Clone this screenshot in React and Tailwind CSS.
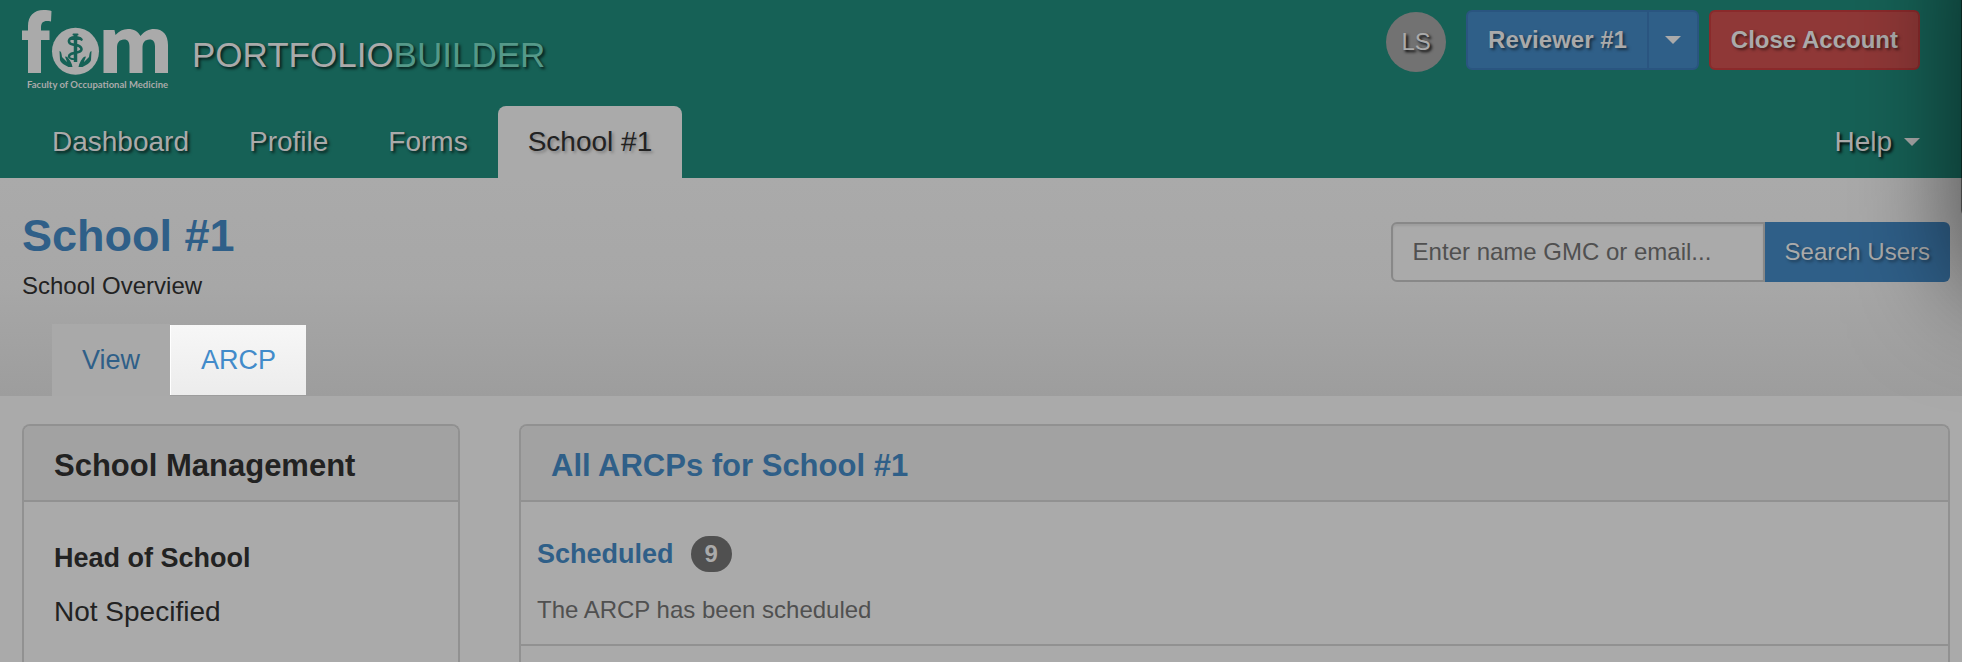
import { useState } from 'react';

const NAV_ITEMS = ['Dashboard', 'Profile', 'Forms', 'School #1'];

const Logo = () => (
  <svg width="146" height="80" viewBox="0 0 146 80" className="overflow-visible" role="img" aria-label="Faculty of Occupational Medicine">
    <g fill="#aaaaaa">
      <path d="M0 20.500H6V16C6 6 12 0 21.500 0C25 0 27.500 .3 29.500 1L29 11.500C22 10 19 12 19 17.500V20.500H27.500V30H19V63H6V30H0Z" />
      <path d="M81.500 20H92.500L93.500 25C97 21 101 19 106 19C112 19 116 21.500 118.500 26C122 21.500 127 19 132 19C141 19 146 25 146 35V63H133V37C133 32 131.500 29.500 127.500 29.500C122.500 29.500 120.500 33 120.500 38V63H107.500V37C107.500 32 106 29.500 102 29.500C97 29.500 95 33 95 38V63H81.500Z" />
      <circle cx="53.500" cy="41.300" r="23.500" />
    </g>
    <g fill="none" stroke="#166156" strokeLinecap="round" strokeLinejoin="round">
      <path d="M53.500 24V52" strokeWidth="3.500" strokeLinecap="butt" />
      <path d="M51.500 24.500H55.500" strokeWidth="2" />
      <path d="M59.500 29.500C57 26.500 48 26.500 47 30.500C46.500 34 50 34.500 54 35C60 36 61.500 40.500 56.500 42C52 43 47 43.500 47 46.500" strokeWidth="2.600" />
      <path d="M49 28.500H57.500" strokeWidth="3" />
      <path d="M47 46.500C47 48.500 50 49.500 53 49" strokeWidth="1.800" />
    </g>
    <g fill="#166156">
      <path d="M37.500 41C39 41 39.500 43 40 47L45 52C44.500 49.500 42.500 47 43.500 46.500C45 46 47.500 49.500 48.500 51.500C50 54 50 55 50.500 57H46.500C43 55 38.500 53 38 50Z" />
      <path d="M69.500 41C68 41 67.500 43 67 47L62 52C62.500 49.500 64.500 47 63.500 46.500C62 46 59.500 49.500 58.500 51.500C57 54 57 55 56.500 57H60.500C64 55 68.500 53 69 50Z" />
    </g>
    <text x="5" y="78" fill="#aaaaaa" fontSize="9.500" fontWeight="700" fontFamily="Lato, sans-serif">
      Faculty of Occupational Medicine
    </text>
  </svg>
);

const Caret = () => (
  <svg width="16" height="8" viewBox="0 0 16 8" fill="#aaaaaa" aria-hidden="true">
    <path d="M0 0H16L8 8Z" />
  </svg>
);

const Panel = ({ title, className, children }) => (
  <section className={`rounded-t-lg border-2 border-b-0 border-[#919191] ${className}`}>
    <div className="h-[76px] rounded-t-md border-b-2 border-[#919191] bg-[#a2a2a2] px-[30px] pt-5">
      <h2 className="text-[31px] leading-10 font-bold">{title}</h2>
    </div>
    {children}
  </section>
);

const App = () => {
  const [active, setActive] = useState('School #1');

  return (
    <div className="relative flex min-h-screen flex-col overflow-hidden bg-[#aaaaaa] font-['Liberation_Sans',Arial,sans-serif] text-[#222222]">
      <header className="bg-[#166156] text-[#aaaaaa]">
        <div className="flex h-[106px] items-start justify-between pt-2.5 pr-[42px] pl-[22px]">
          <a href="#home" className="flex items-start gap-6">
            <Logo />
            <span className="pt-[25px] text-[35px] leading-10 text-shadow-[2px_2px_3px_#000000b3]">
              PORTFOLIO<span className="text-[#559989]">BUILDER</span>
            </span>
          </a>
          <div className="flex items-start text-2xl">
            <span className="mt-0.5 mr-5 flex size-[60px] items-center justify-center rounded-full bg-[#727272] text-shadow-[2px_2px_3px_#000000]">
              LS
            </span>
            <div className="mr-2.5 flex h-[60px] rounded-md border-2 border-[#2a5580] bg-[#2f5f88]">
              <button type="button" className="px-5 font-bold text-shadow-[2px_2px_3px_#00000080]">
                Reviewer #1
              </button>
              <button type="button" aria-label="Switch role" className="border-l-2 border-[#2a5580] px-4">
                <Caret />
              </button>
            </div>
            <button
              type="button"
              className="h-[60px] rounded-md border-2 border-[#8a2a2b] bg-[#8f3837] px-5 font-bold text-shadow-[2px_2px_3px_#00000080]"
            >
              Close Account
            </button>
          </div>
        </div>
        <nav className="flex h-[72px] justify-between pr-[42px] pl-[22px] text-[28px]">
          <div className="flex">
            {NAV_ITEMS.map((item) => (
              <a
                key={item}
                href="#nav"
                onClick={() => setActive(item)}
                className={`flex items-center rounded-t-lg px-[30px] ${
                  item === active
                    ? 'bg-[#aaaaaa] text-[#222222] text-shadow-[2px_2px_3px_#00000040]'
                    : 'text-shadow-[2px_2px_3px_#000000b3]'
                }`}
              >
                {item}
              </a>
            ))}
          </div>
          <button type="button" className="flex items-center gap-3 text-shadow-[2px_2px_3px_#000000]">
            Help <Caret />
          </button>
        </nav>
      </header>

      <div className="flex h-[218px] flex-col justify-between bg-linear-to-b from-[#aaaaaa] via-[#a7a7a7] to-[#9d9d9d]">
        <div className="flex items-start justify-between pt-8 pr-3 pl-[22px]">
          <div>
            <h1 className="text-[45px] leading-[52px] font-bold text-[#2f5f88]">School #1</h1>
            <p className="pt-2 text-2xl leading-8">School Overview</p>
          </div>
          <form className="mt-3 flex h-[60px] text-2xl" onSubmit={(e) => e.preventDefault()}>
            <input
              type="text"
              aria-label="Search users"
              placeholder="Enter name GMC or email..."
              className="w-[374px] rounded-l-md border-2 border-[#888888] bg-[#aaaaaa] px-5 shadow-[inset_0_2px_2px_#00000013] outline-none placeholder:text-[#505050]"
            />
            <button
              type="submit"
              className="rounded-r-md bg-[#2f5f88] px-5 text-[#aaaaaa] text-shadow-[2px_2px_3px_#00000060]"
            >
              Search Users
            </button>
          </form>
        </div>
        <div className="flex h-[72px] items-stretch pl-[52px] text-[27px] text-[#2f5f88]">
          <a href="#view" className="flex items-center bg-[#a9a9a9] px-[30px]">
            View
          </a>
          <a
            href="#arcp"
            className="my-px flex items-center border-l border-white bg-linear-to-b from-[#f7f7f7] to-[#ececec] px-[30px] text-[#428bca]"
          >
            ARCP
          </a>
        </div>
      </div>

      <main className="flex flex-1 gap-[59px] pt-7 pr-3 pl-[22px]">
        <Panel title="School Management" className="w-[438px] shrink-0">
          <div className="px-[30px] pt-9 pb-5">
            <h3 className="text-[27px] leading-10 font-bold">Head of School</h3>
            <p className="pt-3.5 text-[28px] leading-10">Not Specified</p>
          </div>
        </Panel>
        <Panel title={<a href="#arcps" className="text-[#2f5f88]">All ARCPs for School #1</a>} className="flex-1">
          <div className="border-b-2 border-[#919191] px-4 pt-8 pb-3.5">
            <div className="flex items-center gap-[17px]">
              <a href="#scheduled" className="text-[27px] leading-10 font-bold text-[#2f5f88]">
                Scheduled
              </a>
              <span className="flex h-9 items-center rounded-full bg-[#505050] px-3.5 text-2xl font-bold text-[#aaaaaa]">
                9
              </span>
            </div>
            <p className="pt-4 text-2xl leading-10 text-[#505050]">The ARCP has been scheduled</p>
          </div>
        </Panel>
      </main>

      {/* shadow cast by the drawer beyond the right edge */}
      <div className="pointer-events-none absolute -top-40 -right-[600px] h-[378px] w-[601px] rounded-lg bg-black/60 shadow-[0_70px_110px_#00000099]" />
    </div>
  );
};

export default App;
